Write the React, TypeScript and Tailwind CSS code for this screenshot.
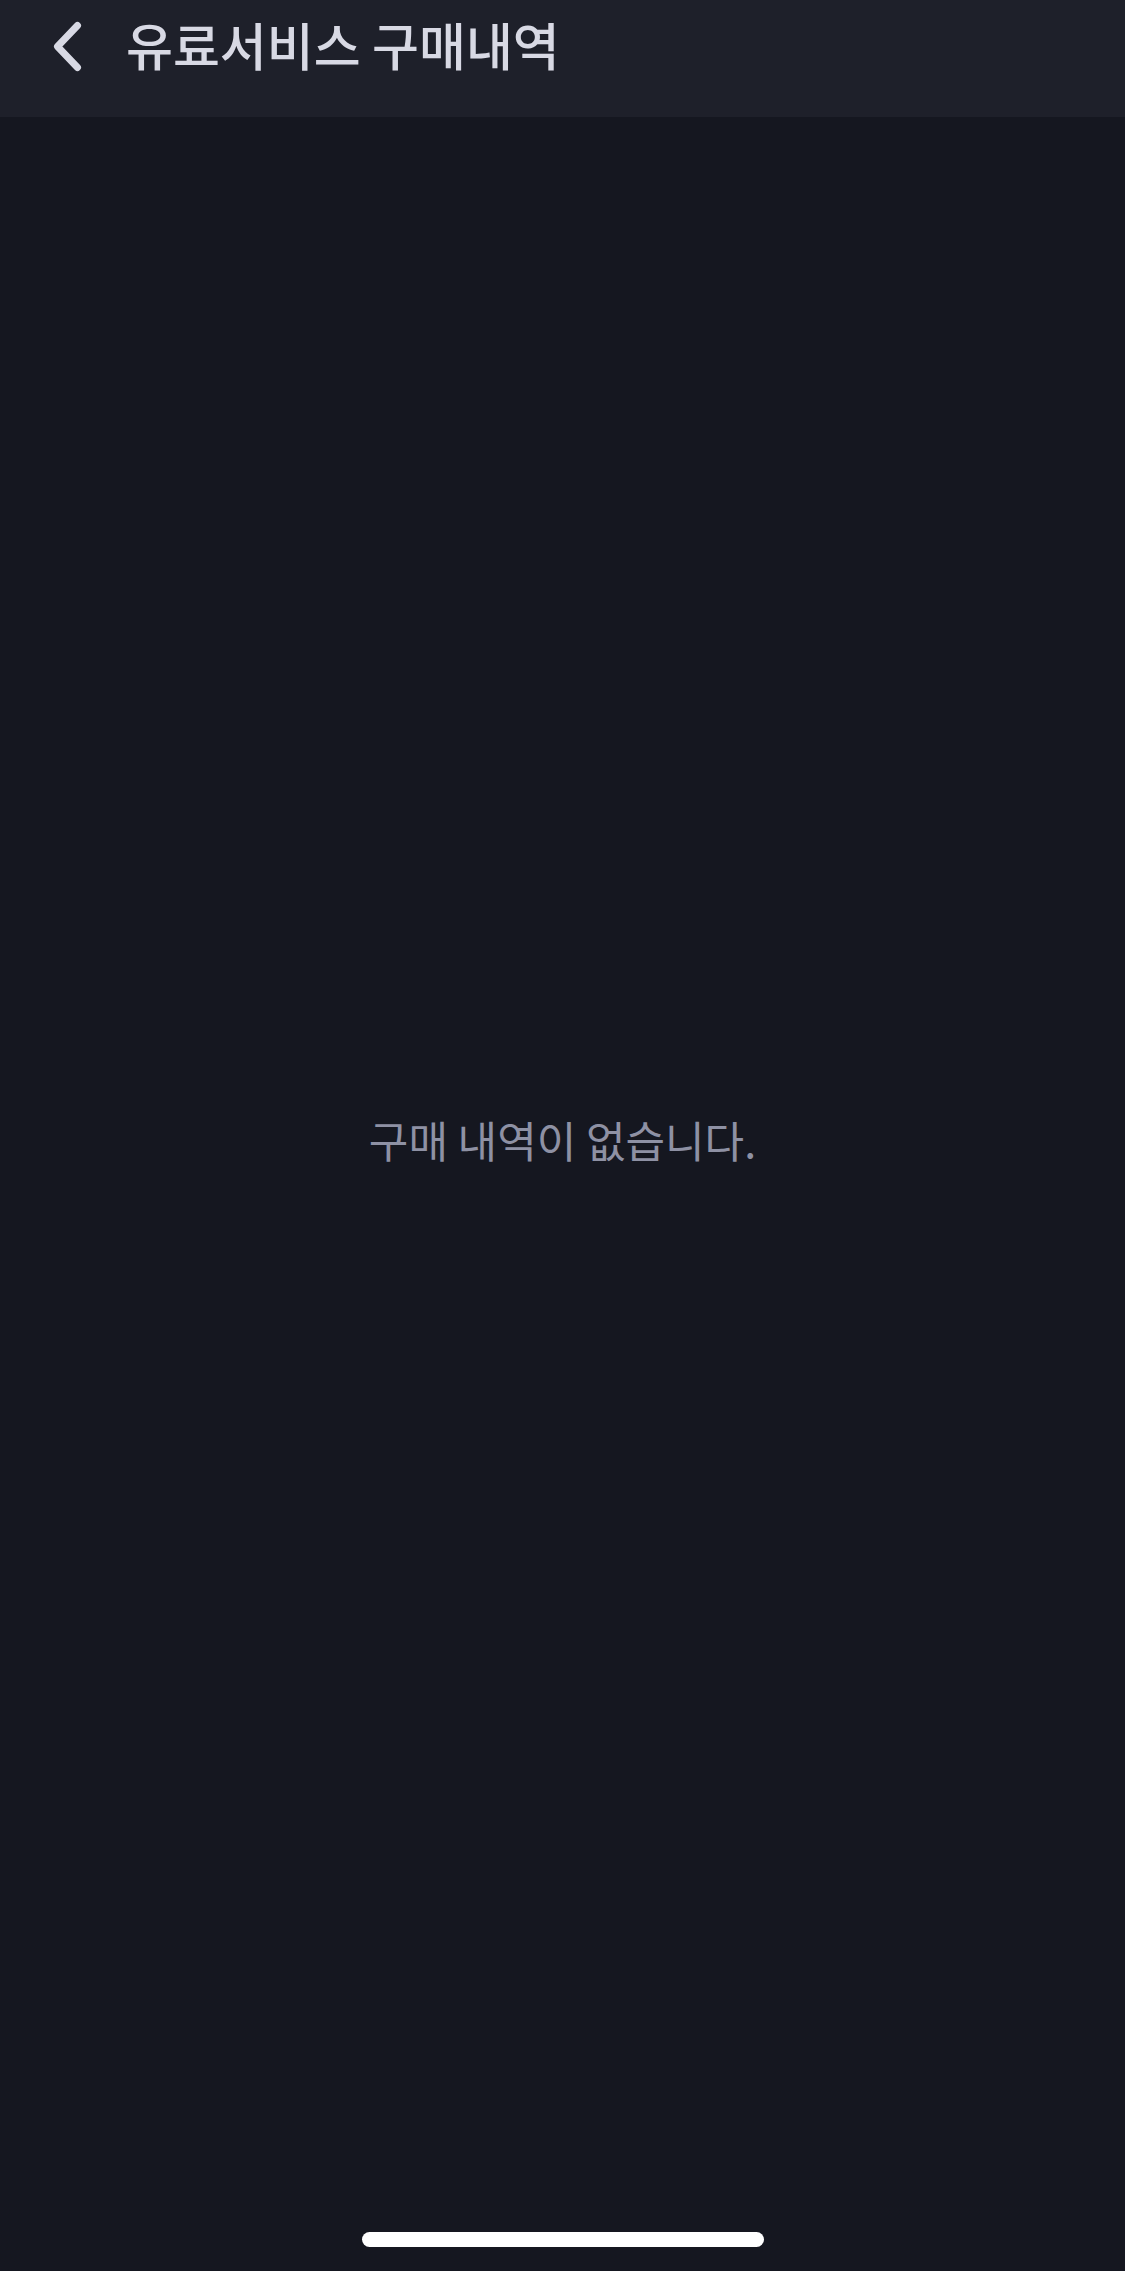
import React from "react";

export default function App() {
  return (
    <div
      className="w-[1125px] h-[2271px] bg-[#151720] flex flex-col overflow-hidden"
      style={{ fontFamily: '"Noto Sans CJK KR", "Noto Sans", sans-serif' }}
    >
      <header className="h-[117px] bg-[#1e202a] flex items-start shrink-0">
        <svg
          width="36"
          height="56"
          viewBox="0 0 36 56"
          fill="none"
          className="ml-[50px] mt-[18px] shrink-0"
        >
          <path
            d="M27.5 7.5 L7.5 28.5 L27.5 49.5"
            stroke="#d8d9e4"
            strokeWidth="7"
            strokeLinecap="round"
            strokeLinejoin="round"
          />
        </svg>
        <h1 className="ml-[40px] mt-[13px] text-[51px] leading-[62px] font-medium text-[#d8d9e4] tracking-[0px] whitespace-nowrap">
          유료서비스 구매내역
        </h1>
      </header>
      <main className="flex-1 flex flex-col">
        <div className="h-[992px]" />
        <div className="flex justify-center">
          <p className="text-[43px] leading-[60px] text-[#8e91a4] tracking-[0px]">
            구매 내역이 없습니다.
          </p>
        </div>
        <div className="flex-1" />
        <div className="flex justify-center pb-[24px]">
          <div className="w-[402px] h-[15px] rounded-full bg-white" />
        </div>
      </main>
    </div>
  );
}
